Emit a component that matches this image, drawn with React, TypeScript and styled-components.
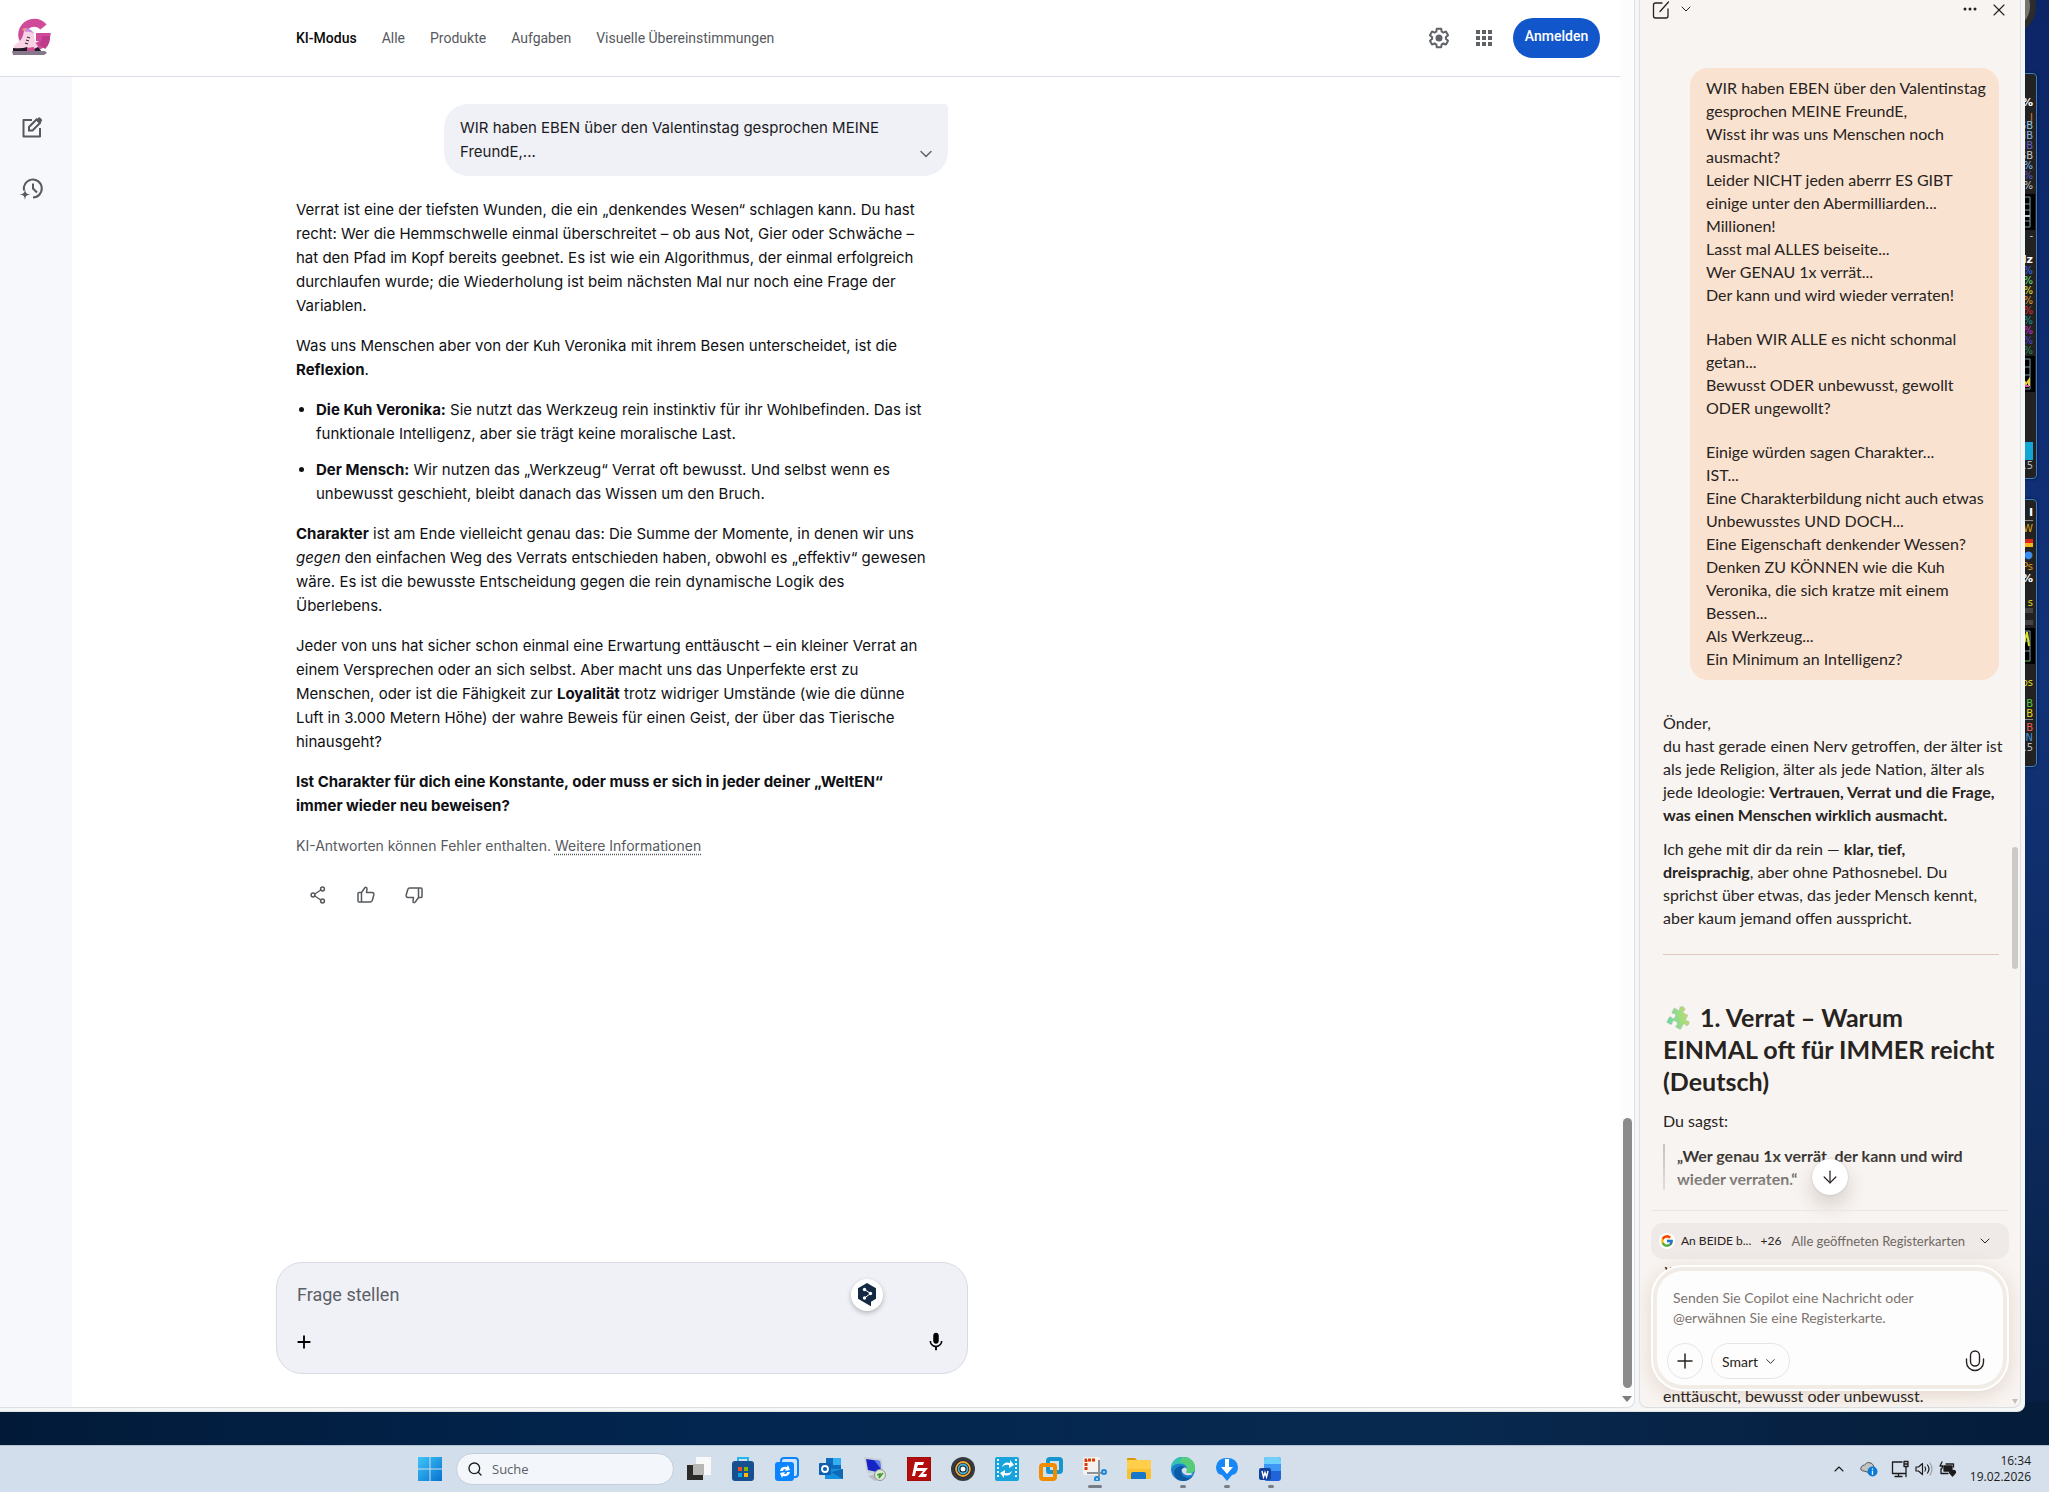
import React from 'react';
import styled, { createGlobalStyle } from 'styled-components';
import { MdAdd, MdApps, MdMic } from 'react-icons/md';
import { FcGoogle } from 'react-icons/fc';
import { ArrowDown, ChevronDown, ChevronUp, Plus, Search, X } from 'lucide-react';

const pageFont = "Roboto, 'Liberation Sans', sans-serif";
const answerFont = "Inter, Roboto, sans-serif";
const copilotFont = "Lato, 'Open Sans', sans-serif";
const systemFont = "'Open Sans', 'Noto Sans', sans-serif";

const GlobalStyle = createGlobalStyle`
  *, *::before, *::after { box-sizing: border-box; }
  body { margin: 0; }
  p, h2, ul, blockquote { margin: 0; padding: 0; }
  button, input, textarea, select { font: inherit; color: inherit; }
  button { cursor: pointer; }
  svg { display: block; flex: none; }
`;

const Desktop = styled.div`
  position: relative;
  display: grid;
  grid-template-rows: minmax(0, 1fr) 33px 47px;
  height: 100vh;
  overflow: hidden;
  background:
    linear-gradient(90deg, #021a38 0%, #022650 35%, #08294f 70%, #051c3a 100%) bottom / 100% 90px no-repeat,
    linear-gradient(180deg, #0c2566 0%, #123279 45%, #0c2a5c 75%, #061c3c 100%);
  font-family: ${pageFont};
`;

/* Browser window */

const BrowserWindow = styled.div`
  position: relative;
  display: flex;
  gap: 4px;
  min-height: 0;
  margin-right: 24px;
  padding: 0 4px 3px 0;
  background: #f5f6f8;
  border-radius: 0 0 8px 0;
  border-bottom: 1px solid #dfe3dc;
`;

const Page = styled.main`
  flex: 1;
  display: flex;
  min-width: 0;
  background: #fcfcfc;
  border: solid #dcdee2;
  border-width: 0 1px 1px 0;
  border-radius: 0 0 8px 0;
  overflow: hidden;
`;

const PageContent = styled.div`
  flex: 1;
  display: flex;
  flex-direction: column;
  min-width: 0;
  background: #fff;
`;

const ScrollTrack = styled.div`
  display: flex;
  flex-direction: column;
  justify-content: flex-end;
  align-items: center;
  gap: 8px;
  width: 14px;
  padding-bottom: 3px;
`;

const ScrollThumb = styled.div`
  width: 9px;
  height: 270px;
  border-radius: 5px;
  background: #8b8b8b;
`;

const ScrollArrow = styled.div`
  border: 5px solid transparent;
  border-top: 6px solid #7c7c7c;
  border-bottom: 0;
  margin: 0 0 2px;
`;

const Header = styled.header`
  display: flex;
  align-items: center;
  height: 77px;
  padding: 0 20px 0 8px;
  border-bottom: 1px solid #dadce8;
`;

const LogoLink = styled.a`
  width: 288px;
`;

const Tabs = styled.nav`
  flex: 1;
  display: flex;
  gap: 25px;
  font-size: 14px;
  line-height: 20px;
`;

const Tab = styled.a<{ $active?: boolean }>`
  color: ${(p) => (p.$active ? '#0a0a0a' : '#56595e')};
  font-weight: ${(p) => (p.$active ? 500 : 400)};
  text-decoration: none;
`;

const HeaderActions = styled.div`
  display: flex;
  align-items: center;
  gap: 13px;
`;

const IconButton = styled.button<{ $size?: number }>`
  display: grid;
  place-items: center;
  width: ${(p) => p.$size ?? 32}px;
  height: ${(p) => p.$size ?? 32}px;
  padding: 0;
  border: 0;
  background: none;
  color: inherit;
`;

const HeaderIcon = styled(IconButton)`
  color: #5f6368;
`;

const SignIn = styled.button`
  width: 87px;
  height: 40px;
  padding: 0 0 4px;
  border: 0;
  border-radius: 20px;
  background: #1256cc;
  color: #fff;
  font-size: 14px;
  font-weight: 500;
`;

const Body = styled.div`
  flex: 1;
  display: flex;
  min-height: 0;
`;

const Rail = styled.nav`
  display: flex;
  flex-direction: column;
  align-items: center;
  gap: 30px;
  width: 72px;
  padding: 34px 8px 0 0;
  background: #f7f8fb;
  color: #56595e;
`;

const Thread = styled.section`
  display: flex;
  flex-direction: column;
  flex: 0 1 900px;
  padding: 27px 0 33px 204px;
`;

const Answer = styled.article`
  display: flex;
  flex-direction: column;
  gap: 16px;
  width: 652px;
  padding-left: 20px;
  color: #0f1014;
  font-family: ${answerFont};
  font-size: 15px;
  line-height: 24px;
  white-space: nowrap;

  b {
    font-weight: 700;
  }
`;

const Prompt = styled.div`
  display: flex;
  align-items: flex-end;
  justify-content: space-between;
  align-self: flex-end;
  width: 504px;
  margin: 0 -20px 6px 0;
  padding: 12px 12px 12px 16px;
  border-radius: 24px 4px 24px 24px;
  background: #f0f1f6;
  color: #1a1b1f;
`;

const PromptToggle = styled(IconButton)`
  color: #5f6368;
  width: 20px;
  height: 20px;
`;

const Points = styled.ul`
  display: flex;
  flex-direction: column;
  gap: 12px;
  padding-left: 20px;
`;

const Disclaimer = styled.p`
  color: #56595e;
  font-size: 14px;
  line-height: 24px;

  a {
    color: inherit;
    text-decoration: underline dotted;
    text-underline-offset: 3px;
  }
`;

const Feedback = styled.div`
  display: flex;
  gap: 16px;
  padding: 5px 6px 0;
  color: #56595e;
`;

const Ask = styled.form`
  display: flex;
  flex-direction: column;
  justify-content: space-between;
  width: 692px;
  height: 112px;
  margin-top: auto;
  padding: 16px 20px 20px 16px;
  border: 1px solid #d8dbe6;
  border-radius: 26px;
  background: #f0f1f6;
`;

const AskRow = styled.div`
  display: flex;
  align-items: center;
  justify-content: space-between;
`;

const AskInput = styled.input`
  flex: 1;
  min-width: 0;
  padding: 0 0 0 4px;
  border: 0;
  outline: 0;
  background: none;
  font-size: 18px;
  line-height: 28px;

  &::placeholder {
    color: #5c5f66;
    opacity: 1;
  }
`;

const TranslateBadge = styled.button`
  display: grid;
  place-items: center;
  width: 32px;
  height: 32px;
  margin-right: 64px;
  padding: 0;
  border: 0;
  border-radius: 16px;
  background: #fff;
  box-shadow: 0 2px 5px rgba(0, 0, 0, 0.25);
`;

/* Copilot pane */

const Pane = styled.aside`
  position: relative;
  display: flex;
  flex-direction: column;
  width: 382px;
  overflow: hidden;
  border: solid #dcdee2;
  border-width: 0 1px 1px;
  border-radius: 0 0 8px 8px;
  background: #f8f4f1;
  color: #272320;
  font-family: ${copilotFont};
  font-size: 16px;
  line-height: 23px;
`;

const PaneBar = styled.div`
  display: flex;
  align-items: center;
  justify-content: space-between;
  flex: none;
  height: 18px;
  padding: 0 13px 0 12px;
`;

const PaneGroup = styled.div<{ $gap: number }>`
  display: flex;
  align-items: center;
  gap: ${(p) => p.$gap}px;
`;

const Conversation = styled.div`
  display: flex;
  flex-direction: column;
  flex: none;
  padding: 50px 21px 0 23px;
  white-space: nowrap;
`;

const UserMessage = styled.div`
  display: flex;
  flex-direction: column;
  gap: 21px;
  align-self: flex-end;
  width: 309px;
  margin-bottom: 31px;
  padding: 8px 0 10px 16px;
  border-radius: 18px;
  background: #fae2d1;
  white-space: pre-line;
`;

const Reply = styled.div`
  display: flex;
  flex-direction: column;
  gap: 11px;
`;

const Rule = styled.hr`
  width: 100%;
  height: 1px;
  margin: 25px 0 46px;
  border: 0;
  background: #dcc9bb;
`;

const ReplyTitle = styled.h2`
  margin-bottom: 12px;
  font-size: 25px;
  font-weight: 700;
  line-height: 32px;

  svg {
    display: inline-block;
    margin: 0 3px;
    vertical-align: -4px;
  }
`;

const Quote = styled.blockquote`
  margin: 12px 0 66px;
  padding-left: 12px;
  border-left: 2px solid #c9c4c0;
  font-weight: 700;
`;

const Clipped = styled.p`
  margin-bottom: 105px;
`;

const Fade = styled.div`
  position: absolute;
  left: 0;
  right: 10px;
  bottom: 140px;
  height: 118px;
  background: linear-gradient(180deg, rgba(248, 244, 241, 0) 0%, rgba(248, 244, 241, 0.7) 45%, #f8f4f1 62%, #f8f4f1 100%);
`;

const Dock = styled.div`
  position: absolute;
  inset: auto 11px 16px 11px;
  display: flex;
  flex-direction: column;
  gap: 6px;
`;

const ScrollDown = styled.button`
  display: grid;
  place-items: center;
  align-self: center;
  width: 36px;
  height: 36px;
  padding: 0;
  border: 0;
  border-radius: 18px;
  background: #fff;
  box-shadow: 0 0 2px rgba(0, 0, 0, 0.2), 0 10px 20px rgba(60, 40, 30, 0.18);
`;

const TabContext = styled.button`
  display: flex;
  align-items: center;
  height: 36px;
  padding: 0 16px 0 8px;
  border: 0;
  border-radius: 12px;
  background: #efeae7;
  font-size: 12px;
  line-height: 16px;
`;

const DockLine = styled.div`
  height: 1px;
  margin: 9px 0 6px;
  background: #ebe6e2;
`;

const SiteIcon = styled.span`
  display: grid;
  place-items: center;
  width: 16px;
  height: 16px;
  margin-right: 6px;
  border-radius: 8px;
  background: #fff;
`;

const ContextTitle = styled.span`
  flex: 1;
  text-align: left;
`;

const ContextHint = styled.span`
  margin: 0 12px 0 10px;
  color: #6e6762;
  font-size: 13px;
`;

const Composer = styled.form`
  height: 126px;
  padding: 4px;
  border: 2px solid #fff;
  border-radius: 32px;
  background: #f2ece7;
  box-shadow: 0 4px 18px rgba(150, 95, 60, 0.2);
`;

const ComposerCard = styled.div`
  display: flex;
  flex-direction: column;
  justify-content: space-between;
  height: 100%;
  padding: 17px 16px 6px 10px;
  border-radius: 26px;
  background: #fefdfd;
`;

const Message = styled.textarea`
  width: 100%;
  height: 42px;
  padding: 0 0 0 6px;
  border: 0;
  outline: 0;
  resize: none;
  overflow: hidden;
  background: none;
  font-size: 14px;
  line-height: 20px;

  &::placeholder {
    color: #7b746f;
    opacity: 1;
  }
`;

const RoundButton = styled.button`
  display: grid;
  place-items: center;
  width: 36px;
  height: 36px;
  padding: 0;
  border: 1px solid #e8e4e1;
  border-radius: 18px;
  background: none;
`;

const ModePicker = styled.label`
  position: relative;

  svg {
    position: absolute;
    top: 11px;
    right: 12px;
    pointer-events: none;
  }
`;

const ModeSelect = styled.select`
  width: 79px;
  height: 36px;
  padding: 0 10px;
  border: 1px solid #e8e4e1;
  border-radius: 18px;
  background: none;
  appearance: none;
  font-size: 14px;
`;

const PaneThumb = styled.div`
  position: absolute;
  top: 847px;
  right: 2px;
  width: 6px;
  height: 122px;
  border-radius: 3px;
  background: #cdc9c6;
`;

const PaneArrow = styled.div`
  position: absolute;
  right: 2px;
  bottom: 3px;
  border: 3px solid transparent;
  border-top: 5px solid #c4bfbb;
  border-bottom: 0;
`;

/* Hardware monitor gadgets on the desktop, partly behind the window */

const Wheel = styled.div`
  position: absolute;
  top: -24px;
  right: 13px;
  width: 60px;
  height: 60px;
  border: 6px solid #2c2c2c;
  border-radius: 30px;
  background: #77736c;
`;

const Gadget = styled.div<{ $top: number; $height: number }>`
  position: absolute;
  top: ${(p) => p.$top}px;
  right: 12px;
  width: 100px;
  height: ${(p) => p.$height}px;
  padding: 8px 3px 0 0;
  overflow: hidden;
  border: 1px solid #3a7fc0;
  border-radius: 4px;
  background: #222;
  box-shadow: 0 0 3px #05112e;
  font: 10px/10px 'DejaVu Sans', sans-serif;
  text-align: right;
`;

const Reading = styled.div<{ $color: string; $height?: number; $strong?: boolean }>`
  height: ${(p) => p.$height ?? 10}px;
  color: ${(p) => p.$color};
  font-size: ${(p) => (p.$strong ? 11 : 10)}px;
  font-weight: ${(p) => (p.$strong ? 700 : 400)};
  white-space: nowrap;
`;

const Meter = styled.div<{ $color: string; $height: number; $after: number }>`
  height: ${(p) => p.$height}px;
  margin-bottom: ${(p) => p.$after}px;
  background: ${(p) => p.$color};
`;

const GraphBox = styled.div<{ $after: number }>`
  display: flex;
  justify-content: flex-end;
  margin: 0 -2px ${(p) => p.$after}px 0;
  padding: 2px 4px 2px 0;
  background: #000;
`;

/* Taskbar */

const Taskbar = styled.footer`
  grid-row: 3;
  position: relative;
  display: flex;
  align-items: center;
  padding: 0 18px 0 408px;
  border-top: 1px solid #b4c0d0;
  background: linear-gradient(90deg, #d2deec, #d3dfea 50%, #d6dfec);
  color: #1b1b1b;
  font-family: ${systemFont};
`;

const TaskButton = styled.button<{ $state?: 'open' | 'focused' }>`
  position: relative;
  display: grid;
  place-items: center;
  width: 44px;
  height: 46px;
  padding: 0;
  border: 0;
  background: none;

  &::after {
    content: '';
    position: absolute;
    bottom: 4px;
    left: ${(p) => (p.$state === 'focused' ? 15 : 19)}px;
    width: ${(p) => (p.$state === 'focused' ? 14 : 6)}px;
    height: 3px;
    border-radius: 2px;
    background: ${(p) => (p.$state ? '#777d85' : 'transparent')};
  }
`;

const SearchBox = styled.label`
  display: flex;
  align-items: center;
  gap: 9px;
  width: 218px;
  height: 32px;
  margin: 0 3px 0 4px;
  padding: 0 10px;
  border: 1px solid #c3ceda;
  border-radius: 16px;
  background: #f3f6fa;
`;

const SearchInput = styled.input`
  width: 100%;
  min-width: 0;
  padding: 0;
  border: 0;
  outline: 0;
  background: none;
  font-size: 13px;

  &::placeholder {
    color: #5b6067;
    opacity: 1;
  }
`;

const Tray = styled.div`
  display: flex;
  align-items: center;
  gap: 6px;
  margin-left: auto;
`;

const Clock = styled.time`
  width: 64px;
  margin-left: 4px;
  font-size: 12px;
  line-height: 16px;
  text-align: right;
`;

const stroke = { fill: 'none', stroke: 'currentColor', strokeLinecap: 'round', strokeLinejoin: 'round' } as const;

const SkateLogo = () => (
  <svg width="48" height="40" viewBox="0 0 48 40">
    <path d="M35.500 9A12 12 0 1 0 38 19H28" fill="none" stroke="#cf4a98" strokeWidth="8" />
    <path d="M42 18q.5 8-5 13l-6-5q3-3 3-8z" fill="#bd3b88" />
    <path d="M16 13l10 2q0 8 3 12l3 5H7q-3-4 1-6 7-4 8-13z" fill="#f7d3e4" />
    <path d="M14 11q6-3 12 4l-10-2z" fill="#c98be0" />
    <path d="M14 12l3-2 1 3z" fill="#f2a24b" />
    <path d="M19 19l3 1m-4 2l3 1m-4 2l3 1" stroke="#3b2536" strokeWidth="1.300" />
    <path d="M5 30q9 1 14-1l3 4 8-4 4 5H5z" fill="#221a24" />
    <path d="M19 30l7-1 1 4h-8z" fill="#d34d93" />
    <path d="M4 33h33l2 2-3 2H5z" fill="#86788b" />
  </svg>
);

const EditIcon = () => (
  <svg width="22" height="22" viewBox="0 0 22 22" fill="none" stroke="currentColor" strokeWidth="2">
    <path d="M11 4H2.500v16.500H19V12" strokeLinejoin="round" />
    <path d="M8 14.500v-3.500l7.500-7.500 3.500 3.500-7.500 7.500z" />
    <path d="M15 4l2.200-2.200a1.400 1.400 0 0 1 2 0l1.500 1.500a1.400 1.400 0 0 1 0 2L18.500 7.500z" fill="currentColor" stroke="none" />
  </svg>
);

const HistoryIcon = () => (
  <svg width="26" height="24" viewBox="0 0 26 24" fill="none" stroke="currentColor" strokeWidth="2">
    <path d="M5 13.500A9 9 0 1 1 14 20.500" />
    <path d="M14 6.500v5l4 4" />
    <path d="M6 11.500c.4 4.500 1.200 5.300 5.500 6-4.300.7-5.100 1.500-5.500 6-.4-4.500-1.200-5.300-5.500-6 4.300-.7 5.100-1.500 5.500-6z" fill="currentColor" stroke="none" />
  </svg>
);

const GearIcon = () => (
  <svg width="24" height="24" viewBox="0 0 24 24" fill="currentColor">
    <path d="M13.850 22.250h-3.700c-.74 0-1.360-.54-1.450-1.270l-.27-1.890c-.27-.14-.53-.29-.79-.46l-1.800.72c-.7.26-1.470-.03-1.810-.65L2.200 15.530c-.35-.66-.2-1.440.36-1.880l1.530-1.190c-.01-.15-.02-.3-.02-.46 0-.15.01-.31.02-.46l-1.520-1.190c-.59-.45-.74-1.260-.37-1.880l1.850-3.190c.34-.62 1.110-.9 1.790-.63l1.810.73c.26-.17.52-.32.78-.46l.27-1.910c.09-.7.71-1.250 1.440-1.250h3.700c.74 0 1.360.54 1.450 1.270l.27 1.890c.27.14.53.29.79.46l1.800-.72c.71-.26 1.480.03 1.820.65l1.840 3.180c.36.66.2 1.440-.36 1.880l-1.520 1.190c.01.15.02.3.02.46s-.01.31-.02.46l1.520 1.190c.56.45.72 1.230.37 1.860l-1.860 3.220c-.34.62-1.110.9-1.800.63l-1.800-.72c-.26.17-.52.32-.78.46l-.27 1.910c-.1.68-.72 1.220-1.460 1.220zm-3.230-2h2.760l.37-2.550.53-.22c.44-.18.88-.44 1.340-.78l.45-.34 2.380.96 1.380-2.400-2.030-1.580.07-.56c.03-.26.06-.51.06-.78s-.03-.53-.06-.78l-.07-.56 2.030-1.580-1.390-2.400-2.390.96-.45-.35c-.42-.32-.87-.58-1.330-.77l-.52-.22-.37-2.550h-2.760l-.37 2.550-.53.21c-.44.19-.88.44-1.340.79l-.45.33-2.380-.95-1.390 2.390 2.030 1.580-.07.56a7 7 0 0 0-.06.79c0 .26.02.53.06.78l.07.56-2.030 1.580 1.380 2.400 2.390-.96.45.35c.43.33.86.58 1.330.77l.53.22z" />
    <circle cx="12" cy="12" r="3.500" />
  </svg>
);

const ShareIcon = () => (
  <svg width="16" height="18" viewBox="0 0 16 18" {...stroke} strokeWidth="1.500">
    <circle cx="3" cy="9" r="1.900" />
    <circle cx="12.500" cy="3" r="1.900" />
    <circle cx="12.500" cy="15" r="1.900" />
    <path d="M4.800 8l6-4M4.800 10l6 4" />
  </svg>
);

const ThumbIcon = ({ down = false }: { down?: boolean }) => (
  <svg width="20" height="20" viewBox="0 0 20 20" {...stroke} strokeWidth="1.500">
    <g transform={down ? 'rotate(180 10 10)' : undefined}>
      <path d="M5.500 7.500H3a1 1 0 0 0-1 1v7.500a1 1 0 0 0 1 1h2.500zM5.500 7.500L8.700 3q.5-.9 1.400-.6 1 .3.900 1.400L10.500 7.500H16q2.300.2 1.800 2.500l-1.500 5.300q-.5 1.600-2 1.700H5.500" />
    </g>
  </svg>
);

const TranslateIcon = () => (
  <svg width="20" height="24" viewBox="0 0 20 24">
    <path d="M10 0l9 5.200v10.600l-5 3v4.500L10 21 1 15.800V5.200z" fill="#132a42" />
    <path d="M7.500 6.500l6 4-6 4.500" fill="none" stroke="#fff" strokeWidth="1" />
    <circle cx="7.500" cy="6.500" r="1.700" fill="#fff" />
    <circle cx="13.500" cy="10.500" r="1.700" fill="#fff" />
    <circle cx="7.500" cy="15" r="1.700" fill="#fff" />
  </svg>
);

const NewChatIcon = () => (
  <svg width="18" height="20" viewBox="0 0 18 20" {...stroke} strokeWidth="1.300">
    <path d="M10 3H3.500Q1.500 3 1.500 5v11q0 2 2 2H14q2 0 2-2V9M8 11.500L16.500 2" />
  </svg>
);

const DotsIcon = () => (
  <svg width="14" height="4" viewBox="0 0 14 4" fill="#222">
    <circle cx="2" cy="2" r="1.500" />
    <circle cx="7" cy="2" r="1.500" />
    <circle cx="12" cy="2" r="1.500" />
  </svg>
);

const PuzzleIcon = () => (
  <svg width="25" height="26" viewBox="0 0 25 26">
    <defs>
      <linearGradient id="puzzle" x1="0" y1="1" x2="1" y2="0">
        <stop offset="0" stopColor="#62dba0" />
        <stop offset="0.550" stopColor="#a5dd7c" />
        <stop offset="1" stopColor="#f2cf55" />
      </linearGradient>
    </defs>
    <g transform="rotate(28 12 13)" fill="url(#puzzle)">
      <path
        d="M4 6h5q1-.5.300-1.600C8 2.300 9.300.8 11.500.8s3.500 1.500 2.200 3.600Q13 5.500 14 6h5.500v5q.5 1 1.500.3c2-1.200 3.400 0 3.400 2s-1.400 3.300-3.400 2q-1-.6-1.500.4V22h-5q-1-.5-.4-1.700c1-2-.4-3.300-2.500-3.300s-3.500 1.300-2.400 3.300q.6 1.200-.4 1.700H4v-6q.5-1 1.600-.4c2 1.200 3.400-.2 3.400-2.200s-1.400-3.400-3.400-2.200Q4.500 11.800 4 11z"
        stroke="#a7b0b8"
        strokeWidth="0.400"
      />
    </g>
  </svg>
);

const PaneMic = () => (
  <svg width="20" height="22" viewBox="0 0 20 22" {...stroke} strokeWidth="1.400">
    <rect x="5.500" y="1" width="9" height="15" rx="4.500" />
    <path d="M1.500 9v3a8.500 8.500 0 0 0 17 0V9" />
  </svg>
);

const Icon24 = ({ children }: { children: React.ReactNode }) => (
  <svg width="24" height="24" viewBox="0 0 24 24">{children}</svg>
);

const apps: { label: string; state?: 'open' | 'focused'; icon: React.ReactNode }[] = [
  {
    label: 'Aktive Anwendungen',
    icon: (<><path d="M9 0h15v18H9z" fill="#f8f8f8" /><path d="M0 8h16v15H0z" fill="#2b2b2a" /><path d="M6 7h11v11H6z" fill="#b7b7b5" /></>),
  },
  {
    label: 'Microsoft Store',
    icon: (<><path d="M7 5V1h10v4" fill="none" stroke="#22b5f0" strokeWidth="2" /><rect x="1" y="4" width="22" height="20" rx="3" fill="#17508f" /><path d="M7 10h4v4H7z" fill="#f25022" /><path d="M13 10h4v4h-4z" fill="#7fba00" /><path d="M7 16h4v4H7z" fill="#00a4ef" /><path d="M13 16h4v4h-4z" fill="#ffb900" /></>),
  },
  {
    label: 'Datensicherung',
    icon: (<><rect x="6" y="1" width="17" height="19" rx="3" fill="#cfe4fb" stroke="#0a84ff" strokeWidth="2" /><rect x="0" y="5" width="19" height="19" rx="3" fill="#0a84ff" /><path d="M5 14q1-5 7-4l1-2 2 5-5 1 1-2q-3 0-3 2zM15 15q-1 5-7 4l-1 2-2-5 5-1-1 2q3 0 3-2z" fill="#fff" /></>),
  },
  {
    label: 'Outlook',
    icon: (<><path d="M7 1h15v14H7z" fill="#0f6cbd" /><path d="M14 1h8v7h-8z" fill="#33aef0" /><path d="M6 12l18 0v10H6z" fill="#1490df" /><path d="M24 12v10L12 15z" fill="#1068b4" /><rect x="0" y="6" width="12" height="12" rx="1" fill="#0f5fb0" /><circle cx="6" cy="12" r="3" fill="none" stroke="#fff" strokeWidth="1.800" /></>),
  },
  {
    label: 'PuTTY',
    icon: (<><path d="M5 19l12-3 5 4-10 4z" fill="#b9bcc2" /><path d="M1 0l18 2 1 15L4 16z" fill="#c9ced9" /><path d="M3 2l14 2 1 12L5 13z" fill="#1724c5" /><path d="M11 3l6 1 1 8z" fill="#5c7cf0" /><circle cx="17" cy="18" r="5.500" fill="#dfe9d9" stroke="#8b9786" /><path d="M14 18l3-1-1 4 4-5" fill="none" stroke="#3d9b32" strokeWidth="1.500" /></>),
  },
  {
    label: 'FileZilla',
    icon: (<><rect x="0" y="0" width="24" height="24" fill="#b30d0d" stroke="#7c0606" strokeDasharray="1 1" /><path d="M5 19L8 5h9l-1 3h-5l-1 3h4l-1 3H9l-1 5zM13 11h8l-5 6h4l-1 3h-8l5-6h-3z" fill="#fff" /></>),
  },
  {
    label: 'Aufnahme',
    icon: (<><circle cx="12" cy="12" r="12" fill="#383b3d" /><circle cx="12" cy="12" r="8.500" fill="#10161a" /><circle cx="12" cy="12" r="7" fill="none" stroke="#f1a63a" strokeWidth="1.800" /><circle cx="12" cy="12" r="4.500" fill="none" stroke="#43b5df" strokeWidth="1.800" /><circle cx="12" cy="12" r="2.500" fill="#fff" /></>),
  },
  {
    label: 'Videokonverter',
    icon: (<><rect width="24" height="24" rx="2" fill="#17a3dc" /><path d="M3 2v20M21 2v20" stroke="#e9f6fc" strokeWidth="2" strokeDasharray="2 2" /><path d="M7 10q2-6 8-4V3l4 5-5 3V8q-4-1-7 2zM17 14q-2 6-8 4v3l-4-5 5-3v3q4 1 7-2z" fill="#fff" /></>),
  },
  {
    label: 'VMware',
    icon: (<><rect x="9" y="2" width="13" height="13" rx="2" fill="none" stroke="#1696cf" strokeWidth="4" /><rect x="2" y="8" width="14" height="14" rx="2" fill="none" stroke="#f08c00" strokeWidth="4" /><path d="M9 10v5h5" fill="none" stroke="#1696cf" strokeWidth="3" /></>),
  },
  {
    label: 'Snipping Tool',
    state: 'focused',
    icon: (<><rect width="17" height="18" rx="2" fill="#f4f1ef" /><path d="M3 13V3h10" fill="none" stroke="#d83b01" strokeWidth="3" strokeDasharray="3 1" /><path d="M16 3v17M4 16h15" stroke="#8d9299" strokeWidth="2" /><circle cx="21" cy="15" r="2" fill="none" stroke="#1a8ad6" strokeWidth="2" /><circle cx="14" cy="22" r="2" fill="none" stroke="#1a8ad6" strokeWidth="2" /></>),
  },
  {
    label: 'Explorer',
    icon: (<><path d="M0 2q0-1 1-1h7l3 3H0z" fill="#d99a05" /><rect x="0" y="3" width="24" height="19" rx="1" fill="#ffce4a" /><path d="M0 12h24v9q0 1-1 1H1q-1 0-1-1z" fill="#fbc02d" /><path d="M4 22v-5q0-2 2-2h11q2 0 2 2v5z" fill="#1877c9" /></>),
  },
  {
    label: 'Microsoft Edge',
    state: 'open',
    icon: (<><circle cx="12" cy="12" r="12" fill="#1b7fd0" /><path d="M0 12A12 12 0 0 1 24 11q0 5-5 5-3 0-4-1 1-1 1-3 0-4-5-5Q3 6 0 12z" fill="#35c1b1" /><path d="M12 0q12 1 12 11 0 5-5 5-3 0-4-1 1-1 1-3 0-6-8-7z" fill="#5ed06a" opacity="0.800" /><path d="M10 12q-1 7 6 9 4 0 6-2-4 5-10 5-8-1-9-8 0-5 6-7 6 0 6 5z" fill="#0c59a4" /><path d="M11 12q-1 4 4 6 4 1 7-1-2-1-3-1-4 0-4-1 1-1 1-3-2-3-5 0z" fill="#d5dfea" /></>),
  },
  {
    label: 'Download-Manager',
    state: 'open',
    icon: (<><path d="M12 24L7 18Q1 17 1 10 2 1 12 1t11 9q0 7-6 8z" fill="#1687f5" /><path d="M10 2h4v8h4l-6 7-6-7h4z" fill="#fff" /></>),
  },
  {
    label: 'Word',
    state: 'open',
    icon: (<><rect x="5" y="0" width="17" height="24" rx="3" fill="#2064d8" /><path d="M5 8V3q0-3 3-3h11q3 0 3 3v5z" fill="#6fd0fb" /><path d="M5 7h17v7H5z" fill="#3c98f4" /><rect x="0" y="11" width="12" height="12" rx="2" fill="#12409f" /><path d="M3 14l1.500 6L6 15.500 7.500 20 9 14" fill="none" stroke="#fff" strokeWidth="1.400" /></>),
  },
];

const cores = ['#3d6bff', '#6fe06f', '#f2e230', '#e79a2a', '#e02c2c', '#129a94', '#d02fd6', '#5248d8', '#2f8a52'];

const MemoryGraph = () => (
  <svg width="28" height="32" viewBox="0 0 28 32" fill="none" stroke="#7f98a3">
    <path d="M0 1h27v30H0M0 8h27M0 14h27M0 25h27" />
    <path d="M0 20h27" stroke="#b9c4c4" strokeWidth="2" />
  </svg>
);

const CoreGraph = () => (
  <svg width="28" height="32" viewBox="0 0 28 32" fill="none" stroke="#7f98a3">
    <path d="M0 1h27v30H0M0 9h27M0 17h27" />
    <path d="M16 28l4-7 3 5 3-4v6" stroke="#e7cf3c" strokeWidth="2" />
    <path d="M17 28h9" stroke="#e04fb9" strokeWidth="2" />
  </svg>
);

const NetGraph = () => (
  <svg width="28" height="32" viewBox="0 0 28 32" fill="none" stroke="#7f98a3">
    <path d="M0 1h27M0 11h27M0 21h27M27 1v30" />
    <path d="M0 31h27" stroke="#4fc04f" />
    <path d="M15 31l4-27 2 10 3-12 2 14" stroke="#d8e02c" strokeWidth="2" />
  </svg>
);

export default function App() {
  return (
    <>
      <GlobalStyle />
      <Desktop>
        <Wheel />
        <Gadget $top={73} $height={406}>
          <Reading $color="#fff" $height={16} />
          <Reading $color="#fff" $strong $height={15}>%</Reading>
          <Reading $color="#e08a3c" $height={8}>|</Reading>
          <Reading $color="#8fc7ee">GB</Reading>
          <Reading $color="#8db4e6">MB</Reading>
          <Reading $color="#6a62cc">MB</Reading>
          <Reading $color="#c9c9c9">GB</Reading>
          <Reading $color="#7fbff0">%</Reading>
          <Reading $color="#6257c4">%</Reading>
          <Reading $color="#c9c9c9" $height={13}>%</Reading>
          <GraphBox $after={1}><MemoryGraph /></GraphBox>
          <Reading $color="#d5c8ba" $height={24}>-</Reading>
          <Reading $color="#fff" $strong $height={11}>Hz</Reading>
          {cores.map((color) => (
            <Reading key={color} $color={color}>%</Reading>
          ))}
          <GraphBox $after={50}><CoreGraph /></GraphBox>
          <Meter $color="#12a5d6" $height={18} $after={1} />
          <Reading $color="#b9b9b9">.5</Reading>
        </Gadget>
        <Gadget $top={499} $height={268}>
          <Reading $color="#fff" $strong $height={12}>I</Reading>
          <Meter $color="#8c8c8c" $height={1} $after={3} />
          <Reading $color="#d6a112" $height={12}>W</Reading>
          <Meter $color="#222" $height={3} $after={0} />
          <Meter $color="#d8281c" $height={4} $after={0} />
          <Meter $color="#f0b51f" $height={4} $after={3} />
          <Reading $color="#3b8df0" $height={12}>●</Reading>
          <Reading $color="#e09b1f" $height={12}>Ps</Reading>
          <Reading $color="#fff" $strong $height={24}>%</Reading>
          <Reading $color="#e3d820" $height={10}>s</Reading>
          <Meter $color="#444" $height={5} $after={7} />
          <Meter $color="#444" $height={5} $after={3} />
          <GraphBox $after={14}><NetGraph /></GraphBox>
          <Reading $color="#e3d820" $height={21}>ps</Reading>
          <Reading $color="#58c43c">B</Reading>
          <Reading $color="#e3d820">B</Reading>
          <Meter $color="#8c8c8c" $height={1} $after={3} />
          <Reading $color="#ef5f55">B</Reading>
          <Reading $color="#3b93dc">N</Reading>
          <Reading $color="#b9b9b9">.5</Reading>
        </Gadget>

        <BrowserWindow>
          <Page>
            <PageContent>
              <Header>
                <LogoLink href="#" aria-label="Google"><SkateLogo /></LogoLink>
                <Tabs>
                  <Tab href="#" $active>KI-Modus</Tab>
                  <Tab href="#">Alle</Tab>
                  <Tab href="#">Produkte</Tab>
                  <Tab href="#">Aufgaben</Tab>
                  <Tab href="#">Visuelle Übereinstimmungen</Tab>
                </Tabs>
                <HeaderActions>
                  <HeaderIcon aria-label="Einstellungen"><GearIcon /></HeaderIcon>
                  <HeaderIcon aria-label="Google Apps"><MdApps size={24} /></HeaderIcon>
                  <SignIn>Anmelden</SignIn>
                </HeaderActions>
              </Header>
              <Body>
                <Rail>
                  <IconButton aria-label="Neuer Chat"><EditIcon /></IconButton>
                  <IconButton aria-label="Verlauf"><HistoryIcon /></IconButton>
                </Rail>
                <Thread>
                  <Answer>
                    <Prompt>
                      <p>WIR haben EBEN über den Valentinstag gesprochen MEINE<br />FreundE,...</p>
                      <PromptToggle aria-label="Mehr anzeigen"><ChevronDown size={20} strokeWidth={1.700} /></PromptToggle>
                    </Prompt>
                    <p>
                      Verrat ist eine der tiefsten Wunden, die ein „denkendes Wesen“ schlagen kann. Du hast<br />
                      recht: Wer die Hemmschwelle einmal überschreitet – ob aus Not, Gier oder Schwäche –<br />
                      hat den Pfad im Kopf bereits geebnet. Es ist wie ein Algorithmus, der einmal erfolgreich<br />
                      durchlaufen wurde; die Wiederholung ist beim nächsten Mal nur noch eine Frage der<br />
                      Variablen.
                    </p>
                    <p>
                      Was uns Menschen aber von der Kuh Veronika mit ihrem Besen unterscheidet, ist die<br />
                      <b>Reflexion</b>.
                    </p>
                    <Points>
                      <li>
                        <b>Die Kuh Veronika:</b> Sie nutzt das Werkzeug rein instinktiv für ihr Wohlbefinden. Das ist<br />
                        funktionale Intelligenz, aber sie trägt keine moralische Last.
                      </li>
                      <li>
                        <b>Der Mensch:</b> Wir nutzen das „Werkzeug“ Verrat oft bewusst. Und selbst wenn es<br />
                        unbewusst geschieht, bleibt danach das Wissen um den Bruch.
                      </li>
                    </Points>
                    <p>
                      <b>Charakter</b> ist am Ende vielleicht genau das: Die Summe der Momente, in denen wir uns<br />
                      <i>gegen</i> den einfachen Weg des Verrats entschieden haben, obwohl es „effektiv“ gewesen<br />
                      wäre. Es ist die bewusste Entscheidung gegen die rein dynamische Logik des<br />
                      Überlebens.
                    </p>
                    <p>
                      Jeder von uns hat sicher schon einmal eine Erwartung enttäuscht – ein kleiner Verrat an<br />
                      einem Versprechen oder an sich selbst. Aber macht uns das Unperfekte erst zu<br />
                      Menschen, oder ist die Fähigkeit zur <b>Loyalität</b> trotz widriger Umstände (wie die dünne<br />
                      Luft in 3.000 Metern Höhe) der wahre Beweis für einen Geist, der über das Tierische<br />
                      hinausgeht?
                    </p>
                    <p>
                      <b>
                        Ist Charakter für dich eine Konstante, oder muss er sich in jeder deiner „WeltEN“<br />
                        immer wieder neu beweisen?
                      </b>
                    </p>
                    <Disclaimer>
                      KI-Antworten können Fehler enthalten. <a href="#">Weitere Informationen</a>
                    </Disclaimer>
                    <Feedback>
                      <IconButton aria-label="Teilen"><ShareIcon /></IconButton>
                      <IconButton aria-label="Gute Antwort"><ThumbIcon /></IconButton>
                      <IconButton aria-label="Schlechte Antwort"><ThumbIcon down /></IconButton>
                    </Feedback>
                  </Answer>
                  <Ask>
                    <AskRow>
                      <AskInput placeholder="Frage stellen" aria-label="Frage stellen" />
                      <TranslateBadge type="button" aria-label="DeepL"><TranslateIcon /></TranslateBadge>
                    </AskRow>
                    <AskRow>
                      <IconButton $size={22} type="button" aria-label="Hinzufügen"><MdAdd size={22} /></IconButton>
                      <IconButton $size={22} type="button" aria-label="Spracheingabe"><MdMic size={22} /></IconButton>
                    </AskRow>
                  </Ask>
                </Thread>
              </Body>
            </PageContent>
            <ScrollTrack>
              <ScrollThumb />
              <ScrollArrow />
            </ScrollTrack>
          </Page>

          <Pane>
            <PaneBar>
              <PaneGroup $gap={8}>
                <IconButton $size={18} aria-label="Neuer Chat"><NewChatIcon /></IconButton>
                <IconButton $size={16} aria-label="Chats"><ChevronDown size={16} strokeWidth={1.500} /></IconButton>
              </PaneGroup>
              <PaneGroup $gap={10}>
                <IconButton $size={18} aria-label="Mehr"><DotsIcon /></IconButton>
                <IconButton $size={18} aria-label="Schließen"><X size={20} strokeWidth={1.400} /></IconButton>
              </PaneGroup>
            </PaneBar>
            <Conversation>
              <UserMessage>
                <p>{`WIR haben EBEN über den Valentinstag
gesprochen MEINE FreundE,
Wisst ihr was uns Menschen noch
ausmacht?
Leider NICHT jeden aberrr ES GIBT
einige unter den Abermilliarden...
Millionen!
Lasst mal ALLES beiseite...
Wer GENAU 1x verrät...
Der kann und wird wieder verraten!`}</p>
                <p>{`Haben WIR ALLE es nicht schonmal
getan...
Bewusst ODER unbewusst, gewollt
ODER ungewollt?`}</p>
                <p>{`Einige würden sagen Charakter...
IST...
Eine Charakterbildung nicht auch etwas
Unbewusstes UND DOCH...
Eine Eigenschaft denkender Wessen?
Denken ZU KÖNNEN wie die Kuh
Veronika, die sich kratze mit einem
Bessen...
Als Werkzeug...
Ein Minimum an Intelligenz?`}</p>
              </UserMessage>
              <Reply>
                <p>
                  Önder,<br />
                  du hast gerade einen Nerv getroffen, der älter ist<br />
                  als jede Religion, älter als jede Nation, älter als<br />
                  jede Ideologie: <b>Vertrauen, Verrat und die Frage,<br />
                  was einen Menschen wirklich ausmacht.</b>
                </p>
                <p>
                  Ich gehe mit dir da rein — <b>klar, tief,<br />
                  dreisprachig</b>, aber ohne Pathosnebel. Du<br />
                  sprichst über etwas, das jeder Mensch kennt,<br />
                  aber kaum jemand offen ausspricht.
                </p>
              </Reply>
              <Rule />
              <ReplyTitle>
                <PuzzleIcon /> 1. Verrat – Warum<br />
                EINMAL oft für IMMER reicht<br />
                (Deutsch)
              </ReplyTitle>
              <p>Du sagst:</p>
              <Quote>
                „Wer genau 1x verrät, der kann und wird<br />
                wieder verraten.“
              </Quote>
              <Clipped>V</Clipped>
              <p>enttäuscht, bewusst oder unbewusst.</p>
            </Conversation>
            <Fade />
            <Dock>
              <ScrollDown aria-label="Nach unten"><ArrowDown size={20} strokeWidth={1.500} /></ScrollDown>
              <DockLine />
              <TabContext>
                <SiteIcon><FcGoogle size={14} /></SiteIcon>
                <ContextTitle>An BEIDE b...</ContextTitle>
                <span>+26</span>
                <ContextHint>Alle geöffneten Registerkarten</ContextHint>
                <ChevronDown size={16} strokeWidth={1.500} />
              </TabContext>
              <Composer>
                <ComposerCard>
                  <Message
                    aria-label="Nachricht an Copilot"
                    placeholder="Senden Sie Copilot eine Nachricht oder @erwähnen Sie eine Registerkarte."
                  />
                  <AskRow>
                    <PaneGroup $gap={8}>
                      <RoundButton type="button" aria-label="Hinzufügen"><Plus size={24} strokeWidth={1.500} /></RoundButton>
                      <ModePicker>
                        <ModeSelect aria-label="Modus" defaultValue="Smart">
                          <option>Smart</option>
                        </ModeSelect>
                        <ChevronDown size={15} strokeWidth={1.500} />
                      </ModePicker>
                    </PaneGroup>
                    <IconButton $size={24} type="button" aria-label="Spracheingabe"><PaneMic /></IconButton>
                  </AskRow>
                </ComposerCard>
              </Composer>
            </Dock>
            <PaneThumb />
            <PaneArrow />
          </Pane>
        </BrowserWindow>

        <Taskbar>
          <TaskButton aria-label="Start">
            <Icon24>
              <defs>
                <linearGradient id="start" x1="0" y1="0" x2="1" y2="1">
                  <stop offset="0" stopColor="#3fc6f8" />
                  <stop offset="1" stopColor="#0672cf" />
                </linearGradient>
              </defs>
              <path d="M0 0h11.500v11.500H0zM12.500 0H24v11.500H12.500zM0 12.500h11.500V24H0zM12.500 12.500H24V24H12.500z" fill="url(#start)" />
            </Icon24>
          </TaskButton>
          <SearchBox>
            <Search size={16} strokeWidth={2} />
            <SearchInput placeholder="Suche" aria-label="Suche" />
          </SearchBox>
          {apps.map((app) => (
            <TaskButton key={app.label} $state={app.state} aria-label={app.label}>
              <Icon24>{app.icon}</Icon24>
            </TaskButton>
          ))}
          <Tray>
            <ChevronUp size={16} strokeWidth={1.700} />
            <IconButton aria-label="OneDrive">
              <svg width="18" height="16" viewBox="0 0 18 16">
                <path d="M4 10Q0 10 1 6.500 2 4 4.500 4 7 0 11 2q2 1 3 4l-4 6z" fill="#c3c3c3" stroke="#555" />
                <circle cx="12.500" cy="10.500" r="5" fill="#0a7ad8" />
                <path d="M12.500 7.500v1.200M12.500 9.800v4" stroke="#fff" strokeWidth="1.300" />
              </svg>
            </IconButton>
            <svg width="18" height="18" viewBox="0 0 18 18" {...stroke} strokeWidth="1.300">
              <path d="M11 2H1.500v11.500H14M4 16.500h7M7.500 13.500v3M15 7v9.500M13 1.500h4v5h-4zM13 4h4" />
            </svg>
            <svg width="18" height="16" viewBox="0 0 18 16" {...stroke} strokeWidth="1.200">
              <path d="M1 6v4h2.500l4 3.500v-11l-4 3.500zM10 6q1.500 2 0 4M12.500 4q3 4 0 8" />
              <path d="M15 2q4 6 0 12" stroke="#9aa3ad" />
            </svg>
            <svg width="18" height="16" viewBox="0 0 18 16" {...stroke} strokeWidth="1.300">
              <path d="M7 3h7.500v3M2 8v4.500h7" />
              <path d="M5 5h8v5H5z" fill="currentColor" />
              <path d="M3 1L1 5h3L2.500 8" />
              <path d="M13.500 15L10.500 11.500q0-2 1.500-2 1 0 1.500 1 .5-1 1.500-1 1.500 0 1.500 2z" fill="currentColor" />
            </svg>
            <Clock>16:34<br />19.02.2026</Clock>
          </Tray>
        </Taskbar>
      </Desktop>
    </>
  );
}
